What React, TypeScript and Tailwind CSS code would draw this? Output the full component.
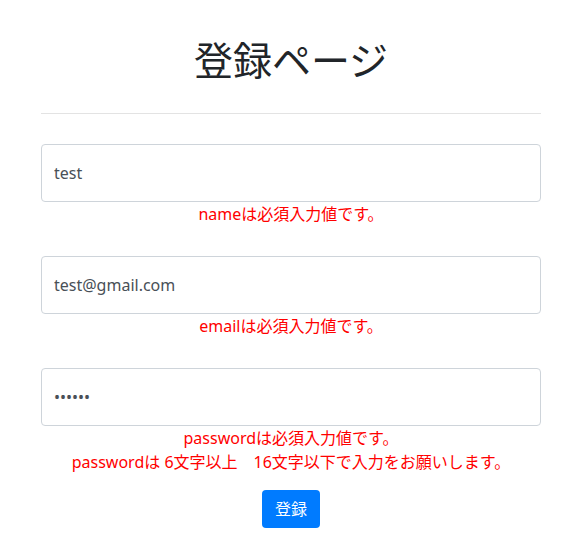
import React from 'react';

const font = { fontFamily: '"Noto Sans", "Noto Sans CJK JP", sans-serif' };

const Field: React.FC<{ type: string; value: string; errors: string[]; className?: string }> = ({ type, value, errors, className }) => (
    <div className={className}>
        <input
            type={type}
            defaultValue={value}
            className="block w-full h-[58px] px-[12px] border border-[#ced4da] rounded-[4px] bg-white text-[16px] text-[#495057] outline-none"
        />
        {errors.map((e, i) => (
            <p key={i} className="text-center text-[16px] leading-[24px] text-[#ff0000]">{e}</p>
        ))}
    </div>
);

export default function App() {
    return (
        <div className="min-h-[547px] bg-white" style={font}>
            <div className="w-[500px] ml-[41px] pt-[36px]">
                <h1 className="text-center text-[39px] leading-[48px] font-normal text-[#212529]">登録ページ</h1>
                <hr className="mt-[29px] mb-[30px] border-0 border-t border-[#e3e3e3]" />
                <form onSubmit={e => e.preventDefault()}>
                    <Field className="mb-[30px]" type="text" value="test" errors={['nameは必須入力値です。']} />
                    <Field className="mb-[30px]" type="email" value="test@gmail.com" errors={['emailは必須入力値です。']} />
                    <Field
                        className="mb-[16px]"
                        type="password"
                        value="123456"
                        errors={['passwordは必須入力値です。', 'passwordは 6文字以上　16文字以下で入力をお願いします。']}
                    />
                    <div className="flex justify-center">
                        <button type="submit" className="h-[38px] px-[13px] rounded-[4px] bg-[#007bff] text-white text-[16px]">登録</button>
                    </div>
                </form>
            </div>
        </div>
    );
}
